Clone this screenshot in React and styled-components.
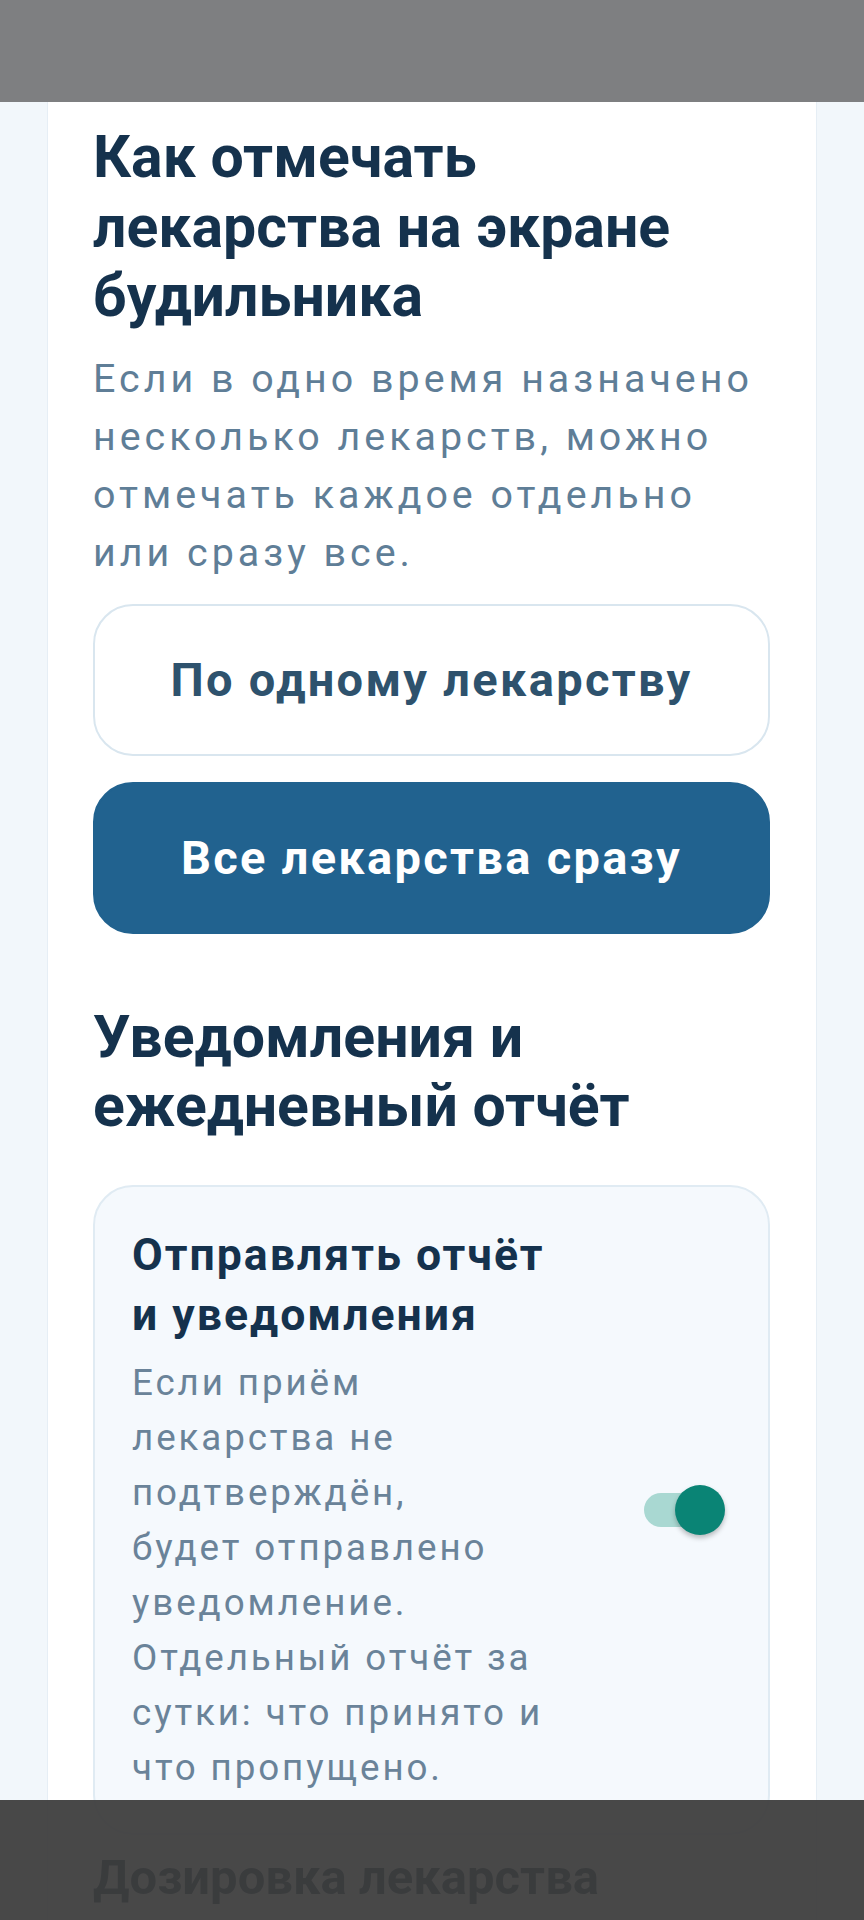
import React from 'react';
import styled, { createGlobalStyle } from 'styled-components';

const GlobalStyle = createGlobalStyle`
  html, body {
    margin: 0;
    padding: 0;
    background: #f2f7fb;
    font-family: Roboto, 'Noto Sans', Arial, sans-serif;
  }
  * { box-sizing: border-box; }
`;

const App = () => {
    return (
        <Page>
            <GlobalStyle />
            <StatusBar />
            <Card>
                <Title>Как отмечать лекарства на экране будильника</Title>
                <Lead>
                    Если в одно время назначено несколько лекарств, можно отмечать каждое отдельно или сразу все.
                </Lead>
                <Choice>По одному лекарству</Choice>
                <Choice $active>Все лекарства сразу</Choice>

                <Title $gap>Уведомления и ежедневный отчёт</Title>
                <SettingBox>
                    <SettingText>
                        <SettingTitle>Отправлять отчёт и уведомления</SettingTitle>
                        <SettingNote>
                            Если приём лекарства не подтверждён,<br />
                            будет отправлено уведомление. Отдельный отчёт за сутки: что принято и что пропущено.
                        </SettingNote>
                    </SettingText>
                    <Switch>
                        <Track />
                        <Knob />
                    </Switch>
                </SettingBox>

                <NextTitle>Дозировка лекарства</NextTitle>
            </Card>
            <NavScrim />
        </Page>
    );
};

export default App;

const Page = styled.div`
  height: 1920px;
  background: #f2f7fb;
  overflow: hidden;
`;

const StatusBar = styled.div`
  height: 102px;
  background: #7e7f81;
`;

const Card = styled.div`
  margin: 0 47px;
  background: #fff;
  border: 1px solid #e6eef5;
  border-top: none;
  padding: 20px 46px 40px 45px;
  display: flex;
  flex-direction: column;
`;

const Title = styled.h2`
  margin: ${p => (p.$gap ? '68px 0 0' : '0')};
  font-size: 59px;
  line-height: 69.6px;
  font-weight: 700;
  color: #15324d;
`;

const NextTitle = styled(Title)`
  margin-top: 8px;
  font-size: 49px;
`;

const Lead = styled.p`
  margin: 19px 0 0;
  font-size: 39.4px;
  line-height: 58px;
  letter-spacing: 4px;
  color: #5f7e97;
`;

const Choice = styled.button`
  margin-top: ${p => (p.$active ? '26px' : '22px')};
  height: 152px;
  width: 100%;
  border-radius: 40px;
  border: 2px solid ${p => (p.$active ? '#21628f' : '#d9e6ef')};
  background: ${p => (p.$active ? '#21628f' : '#fff')};
  color: ${p => (p.$active ? '#fff' : '#2e526d')};
  font-family: Roboto, Arial, sans-serif;
  font-size: 47px;
  font-weight: 700;
  letter-spacing: 2.3px;
  display: flex;
  align-items: center;
  justify-content: center;
`;

const SettingBox = styled.div`
  margin-top: 44px;
  background: #f5f9fd;
  border: 2px solid #e0ebf3;
  border-radius: 40px;
  padding: 38px 40px 38px 37px;
  display: flex;
  align-items: center;
  justify-content: space-between;
`;

const SettingText = styled.div`
  width: 432px;
`;

const SettingTitle = styled.div`
  font-size: 44.6px;
  line-height: 60px;
  font-weight: 700;
  letter-spacing: 2px;
  color: #15324d;
`;

const SettingNote = styled.div`
  margin-top: 10px;
  font-size: 36.75px;
  line-height: 55px;
  letter-spacing: 2.9px;
  color: #6a8399;
`;

const Switch = styled.div`
  position: relative;
  width: 84px;
  height: 50px;
  display: flex;
  align-items: center;
`;

const Track = styled.div`
  width: 70px;
  height: 34px;
  border-radius: 17px;
  background: #a9d8d2;
`;

const Knob = styled.div`
  position: absolute;
  right: 3px;
  top: 0;
  width: 50px;
  height: 50px;
  border-radius: 50%;
  background: #0a8475;
  box-shadow: 0 3px 5px rgba(0, 0, 0, 0.25);
`;

const NavScrim = styled.div`
  position: fixed;
  left: 0;
  right: 0;
  bottom: 0;
  height: 120px;
  background: rgba(61, 61, 61, 0.94);
`;
